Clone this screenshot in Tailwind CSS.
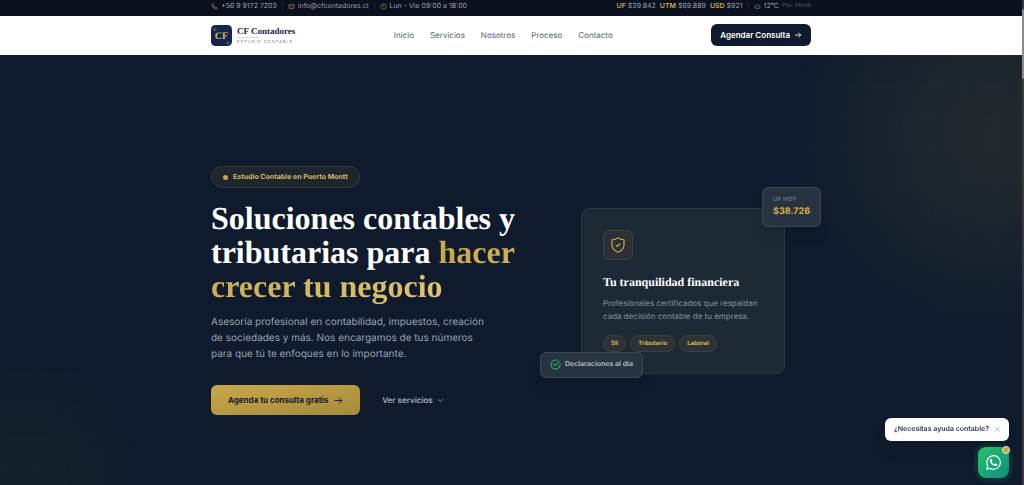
<!DOCTYPE html>
<html lang="es">
<head>
<meta charset="utf-8">
<meta name="viewport" content="width=device-width, initial-scale=1">
<title>CF Contadores</title>
<script src="https://cdn.jsdelivr.net/npm/@tailwindcss/browser@4"></script>
</head>
<body class="flex min-h-screen bg-[#3a3a3c] font-['Inter','Liberation_Sans',sans-serif] [text-rendering:geometricPrecision]">
<div class="flex min-w-0 flex-1 flex-col bg-[#0f1b2d]">
  <div class="bg-[#0a101e] text-[7px] leading-3 text-[#94a0b2]">
    <div class="mx-auto flex h-4 w-full max-w-[640px] justify-between px-5">
      <div class="flex h-3 items-center">
        <a href="#" class="flex items-center gap-[3px]"><svg class="size-[7px] text-[#b5953f]" viewBox="0 0 24 24" fill="none" stroke="currentColor" stroke-width="2" stroke-linejoin="round"><path d="M3 5a2 2 0 0 1 2-2h3.3l2 5.500-2.500 1.500a11 11 0 0 0 6 6l1.500-2.500L21 15.700V19a2 2 0 0 1-2 2C10 21 3 14 3 5z"/></svg>+56 9 9172 7203</a>
        <span class="mx-[5px] h-2 w-px bg-white/10"></span>
        <a href="#" class="flex items-center gap-[3px]"><svg class="size-[7px] text-[#b5953f]" viewBox="0 0 24 24" fill="none" stroke="currentColor" stroke-width="2"><rect x="3" y="5" width="18" height="14" rx="2"/><path d="m3 8 9 6 9-6"/></svg>info@cfcontadores.cl</a>
        <span class="mx-[5px] h-2 w-px bg-white/10"></span>
        <span class="flex items-center gap-[3px]"><svg class="size-[7px] text-[#b5953f]" viewBox="0 0 24 24" fill="none" stroke="currentColor" stroke-width="2"><circle cx="12" cy="12" r="9"/><path d="M12 7v5l3 3"/></svg>Lun - Vie 09:00 a 18:00</span>
      </div>
      <div class="flex h-3 items-center">
        <div class="flex gap-1">
          <span><b class="font-semibold text-[#d0ad4c]">UF</b> $39.842</span>
          <span><b class="font-semibold text-[#d0ad4c]">UTM</b> $69.889</span>
          <span><b class="font-semibold text-[#d0ad4c]">USD</b> $921</span>
        </div>
        <span class="mx-[5px] h-2 w-px bg-white/10"></span>
        <svg class="mr-[3px] size-[7px]" viewBox="0 0 24 24" fill="none" stroke="currentColor" stroke-width="2"><path d="M3 14a4 4 0 0 0 4 4h10a4 4 0 0 0 1-7.900A5.500 5.500 0 0 0 7.500 9.500 4.500 4.500 0 0 0 3 14z"/></svg>
        <span>12°C</span><span class="ml-[3px] text-[6px] text-[#4d5868]">Pto. Montt</span>
      </div>
    </div>
  </div>

  <header class="bg-white">
    <div class="mx-auto flex h-[39px] w-full max-w-[640px] items-center justify-between px-5 pb-px">
      <a href="#" class="flex items-center gap-[5px]">
        <svg class="size-[21px]" viewBox="0 0 42 42"><rect width="42" height="42" rx="9" fill="#14244a"/><path d="M8 5v8M4 9h8M34 32v8M30 36h8" stroke="#8b8252" stroke-width="1"/><text x="21" y="28" text-anchor="middle" font-family="Liberation Serif, serif" font-weight="700" font-size="20" fill="#dcb85a">CF</text></svg>
        <span class="flex flex-col font-['Liberation_Serif',serif]">
          <span class="text-[9px] leading-[11px] font-bold text-[#17254a]">CF Contadores</span>
          <span class="h-px w-[22px] bg-[#e8d9ae]"></span>
          <span class="font-['Inter',sans-serif] text-[4px] leading-[7px] tracking-[1px] text-[#7d8798]">ESTUDIO CONTABLE</span>
        </span>
      </a>
      <nav class="flex gap-4 text-[8px] text-[#526075]">
        <a href="#">Inicio</a><a href="#">Servicios</a><a href="#">Nosotros</a><a href="#">Proceso</a><a href="#">Contacto</a>
      </nav>
      <button class="flex h-[22px] items-center gap-1 rounded-md bg-[#0f1b2d] px-[9px] text-[8px] font-semibold text-white">Agendar Consulta
        <svg class="size-2" viewBox="0 0 24 24" fill="none" stroke="currentColor" stroke-width="2.500" stroke-linecap="round" stroke-linejoin="round"><path d="M4 12h16M14 6l6 6-6 6"/></svg>
      </button>
    </div>
  </header>

  <main class="relative flex flex-1 items-center overflow-hidden bg-[radial-gradient(circle_at_calc(100%_-_30px)_80px,#21282e_0px,#1f272e_60px,#0f1b2d00_200px),radial-gradient(circle_at_20px_100%,#152129_0px,#0f1b2d00_140px)] pt-[41px]">
    <div class="absolute inset-0 bg-[linear-gradient(#ffffff02_1px,transparent_1px),linear-gradient(90deg,#ffffff02_1px,transparent_1px)] bg-[size:32px_32px]"></div>
    <div class="relative mx-auto grid w-full max-w-[640px] grid-cols-[minmax(0,1fr)_256px] items-center px-5">
      <section>
        <div class="flex h-[22px] w-fit items-center gap-[5px] rounded-full border border-[#39392f] bg-[#1d262e] px-[11px] text-[7px] font-bold text-[#d2b963]"><span class="size-[5px] rounded-full bg-[#cba744]"></span>Estudio Contable en Puerto Montt</div>
        <h1 class="mt-[13px] font-['Liberation_Serif',serif] text-[32px] leading-[34px] font-bold whitespace-nowrap text-white">Soluciones contables y<br>tributarias para <span class="bg-linear-to-r from-[#c9a84c] to-[#dfc372] bg-clip-text text-transparent">hacer<br>crecer tu negocio</span></h1>
        <p class="mt-[11px] text-[10px] leading-4 text-[#98a1af]">Asesoría profesional en contabilidad, impuestos, creación<br>de sociedades y más. Nos encargamos de tus números<br>para que tú te enfoques en lo importante.</p>
        <div class="mt-[23px] flex items-center gap-[22px]">
          <button class="flex h-[30px] items-center gap-[6px] rounded-md bg-linear-to-br from-[#c9a84c] to-[#a68a3a] px-[17px] text-[8px] font-bold text-[#14202d]">Agenda tu consulta gratis
            <svg class="size-[9px]" viewBox="0 0 24 24" fill="none" stroke="currentColor" stroke-width="2.500" stroke-linecap="round" stroke-linejoin="round"><path d="M3 12h18M14 5l7 7-7 7"/></svg></button>
          <a href="#" class="flex items-center gap-1 text-[8px] font-semibold text-[#a5adb9]">Ver servicios
            <svg class="size-[7px]" viewBox="0 0 24 24" fill="none" stroke="currentColor" stroke-width="2.500" stroke-linecap="round" stroke-linejoin="round"><path d="m4 8 8 8 8-8"/></svg></a>
        </div>
      </section>
      <section class="relative mx-[26px] rounded-lg border border-[#2c3744] bg-[#1e2936] p-[21px]">
        <div class="flex size-[30px] items-center justify-center rounded-md border border-[#3f4140] bg-[#2a3036]">
          <svg class="size-[18px] text-[#d0ae4b]" viewBox="0 0 24 24" fill="none" stroke="currentColor" stroke-width="1.500" stroke-linecap="round" stroke-linejoin="round"><path d="M9.500 12.500 11 14l3.500-3.500M12 2.500C9.500 4.300 7 5 4 5v7c0 4.500 3 7.500 8 9.800 5-2.300 8-5.300 8-9.800V5c-3 0-5.500-.7-8-2.500z"/></svg>
        </div>
        <h2 class="mt-[14px] font-['Liberation_Serif',serif] text-[12px] leading-4 font-bold whitespace-nowrap text-white">Tu tranquilidad financiera</h2>
        <p class="mt-[7px] text-[8px] leading-[13px] whitespace-nowrap text-[#87919f]">Profesionales certificados que respaldan<br>cada decisión contable de tu empresa.</p>
        <div class="mt-3 flex gap-1 text-[6px] font-bold text-[#cdb35a]">
          <span class="flex h-[17px] items-center rounded-full border border-[#3d403e] bg-[#2d3236] px-[7px]">SII</span>
          <span class="flex h-[17px] items-center rounded-full border border-[#3d403e] bg-[#2d3236] px-[7px]">Tributario</span>
          <span class="flex h-[17px] items-center rounded-full border border-[#3d403e] bg-[#2d3236] px-[7px]">Laboral</span>
        </div>
        <div class="absolute -top-[22px] -right-[37px] rounded-md border border-[#3c4755] bg-[#283341] px-[10px] pt-[6px] pb-[7px] shadow-lg">
          <div class="text-[6px] leading-[11px] font-medium tracking-wide text-[#77818f]">UF HOY</div>
          <div class="text-[9px] leading-[14px] font-bold text-[#d0ae4b]">$38.726</div>
        </div>
        <div class="absolute -bottom-[5px] -left-[42px] flex h-[26px] items-center gap-1 rounded-md border border-[#3c4755] bg-[#283341] px-[9px] text-[7px] font-semibold whitespace-nowrap text-[#bac0c9] shadow-lg">
          <svg class="size-[11px] text-[#22b967]" viewBox="0 0 24 24" fill="none" stroke="currentColor" stroke-width="2.200" stroke-linecap="round" stroke-linejoin="round"><path d="M22 11v1A10 10 0 1 1 16 2.900M21 5 11.500 14.500l-4-4"/></svg>Declaraciones al día</div>
      </section>
    </div>
  </main>
</div>

<aside class="w-[2px] shrink-0 pt-[9px]"><div class="h-[70px] rounded-full bg-[#8b8b8d]"></div></aside>

<div class="fixed right-[15px] bottom-[7px] flex flex-col items-end gap-[6px]">
  <div class="flex h-[23px] items-center gap-[6px] rounded-md bg-white px-[9px] text-[7px] font-semibold text-[#283548] shadow-lg">¿Necesitas ayuda contable?
    <button aria-label="Cerrar" class="flex"><svg class="size-[5px] text-[#8c96a5]" viewBox="0 0 12 12" fill="none" stroke="currentColor" stroke-width="1.500"><path d="m1 1 10 10M11 1 1 11"/></svg></button></div>
  <button aria-label="WhatsApp" class="relative flex size-[31px] items-center justify-center rounded-lg bg-linear-to-br from-[#25c566] to-[#128c7e] text-white ring-4 ring-[#22c55e]/10">
    <svg class="size-[15px]" viewBox="0 0 24 24" fill="currentColor"><path d="M17.500 14.400c-.3-.1-1.800-.9-2-.9-.3-.1-.5-.2-.7.100s-.8 1-.9 1.100c-.2.200-.3.200-.6.100s-1.300-.5-2.400-1.500a9 9 0 0 1-1.700-2.100c-.2-.3 0-.5.100-.6l.5-.5.300-.5v-.5l-.9-2.200c-.2-.6-.5-.5-.7-.5h-.6c-.2 0-.5.100-.8.400-.3.300-1 1-1 2.500s1.100 2.900 1.200 3.100c.1.200 2.100 3.200 5.100 4.500.7.300 1.300.5 1.700.6.700.2 1.400.2 1.900.1.600-.1 1.800-.7 2-1.400.2-.7.200-1.300.2-1.400-.1-.2-.3-.3-.7-.3zM12 21.800a9.900 9.900 0 0 1-5-1.400l-.4-.2-3.700 1 1-3.700-.2-.4A9.900 9.900 0 1 1 12 21.800zM20.500 3.500A11.900 11.900 0 0 0 1.800 17.800L.1 24l6.300-1.700A11.900 11.900 0 0 0 20.500 3.500z"/></svg>
    <span class="absolute -top-px -right-px size-2 rounded-full border border-[#f1e6c6] bg-[#c9a84c]"></span>
  </button>
</div>
</body>
</html>
